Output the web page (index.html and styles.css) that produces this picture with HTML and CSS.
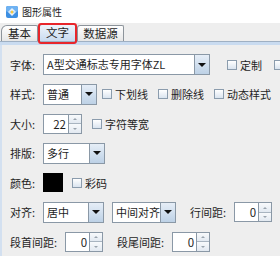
FILE: index.html
```html
<!DOCTYPE html>
<html lang="zh">
<head>
    <meta charset="UTF-8">
    <title>图形属性</title>
    <link rel="stylesheet" href="styles.css">
</head>
<body>
    <div class="titlebar">
        <svg class="app-icon" width="12" height="12" viewBox="0 0 12 12">
            <rect x="0" y="0" width="12" height="12" rx="2" fill="#3d8fe2"/>
            <rect x="0" y="0" width="12" height="6" rx="2" fill="#6fb2f2"/>
            <path d="M6 2 L10 6 L6 10 L2 6 Z" fill="#e8f2fc"/>
            <circle cx="6" cy="6" r="1.6" fill="#f5c842"/>
            <circle cx="4.2" cy="6" r="0.8" fill="#9cc8f0"/>
            <circle cx="7.8" cy="6" r="0.8" fill="#9cc8f0"/>
        </svg>
        <span>图形属性</span>
    </div>

    <div class="tabstrip">
        <div class="tab tab-first">基本</div>
        <div class="tab tab-active">文字</div>
        <div class="tab tab-wide">数据源</div>
        <div class="tab-mark"></div>
    </div>
    <div class="tabline"></div>

    <div class="panel">
        <div class="row">
            <span class="label">字体:</span>
            <div class="combo w-font">
                <span class="combo-text">A型交通标志专用字体ZL</span>
                <span class="combo-btn"><i class="arrow"></i></span>
            </div>
            <span class="check gap-17"><i class="cb"></i>定制</span>
            <span class="check gap-12"><i class="cb"></i></span>
        </div>
        <div class="row">
            <span class="label">样式:</span>
            <div class="combo w-style">
                <span class="combo-text">普通</span>
                <span class="combo-btn"><i class="arrow"></i></span>
            </div>
            <span class="check gap-5"><i class="cb"></i>下划线</span>
            <span class="check gap-10"><i class="cb"></i>删除线</span>
            <span class="check gap-10"><i class="cb"></i>动态样式</span>
        </div>
        <div class="row">
            <span class="label">大小:</span>
            <div class="spin w-size">
                <span class="spin-text">22</span>
                <span class="spin-btns"><i class="up"></i><i class="down"></i></span>
            </div>
            <span class="check gap-10"><i class="cb"></i>字符等宽</span>
        </div>
        <div class="row">
            <span class="label">排版:</span>
            <div class="combo w-layout">
                <span class="combo-text">多行</span>
                <span class="combo-btn"><i class="arrow"></i></span>
            </div>
        </div>
        <div class="row">
            <span class="label">颜色:</span>
            <span class="swatch"></span>
            <span class="check gap-9"><i class="cb"></i>彩码</span>
        </div>
        <div class="row">
            <span class="label">对齐:</span>
            <div class="combo w-align">
                <span class="combo-text">居中</span>
                <span class="combo-btn"><i class="arrow"></i></span>
            </div>
            <div class="combo w-valign gap-8">
                <span class="combo-text">中间对齐</span>
                <span class="combo-btn"><i class="arrow"></i></span>
            </div>
            <span class="label-inline gap-14">行间距:</span>
            <div class="spin w-num gap-8">
                <span class="spin-text">0</span>
                <span class="spin-btns"><i class="up"></i><i class="down"></i></span>
            </div>
        </div>
        <div class="row">
            <span class="label-inline">段首间距:</span>
            <div class="spin w-num gap-8">
                <span class="spin-text">0</span>
                <span class="spin-btns"><i class="up"></i><i class="down"></i></span>
            </div>
            <span class="label-inline gap-14">段尾间距:</span>
            <div class="spin w-num gap-8">
                <span class="spin-text">0</span>
                <span class="spin-btns"><i class="up"></i><i class="down"></i></span>
            </div>
        </div>
    </div>
</body>
</html>
```

FILE: styles.css
```css
body {
    margin: 0;
    width: 280px;
    height: 256px;
    overflow: hidden;
    background-color: #eeeeee;
    font-family: "Noto Sans CJK SC", "Liberation Sans", sans-serif;
    font-size: 11px;
    color: #1e1e1e;
}
.titlebar {
    height: 23px;
    background-color: #fff;
    display: flex;
    align-items: center;
    padding-left: 6px;
    gap: 4px;
    font-size: 10px;
}
.app-icon {
    flex: none;
}
.tabstrip {
    position: relative;
    height: 18px;
    display: flex;
    align-items: flex-end;
    padding-left: 1px;
}
.tab {
    box-sizing: border-box;
    height: 16px;
    border: 1px solid #8d949b;
    border-bottom: none;
    border-radius: 3px 2px 0 0;
    background: linear-gradient(#ffffff, #e6e6e6);
    font-size: 11.5px;
    line-height: 15px;
    text-align: center;
}
.tab-first {
    width: 37px;
    border-top-left-radius: 6px;
}
.tab-active {
    width: 37px;
    margin-left: 1px;
    height: 17px;
    border-color: #9aaabb;
    background: linear-gradient(#eef4fb, #c9dbf0);
}
.tab-wide {
    width: 47px;
    margin-left: 1px;
}
.tab-mark {
    position: absolute;
    left: 38px;
    top: 0;
    width: 39px;
    height: 21px;
    box-sizing: border-box;
    border: 2px solid #e8262b;
    border-radius: 3px;
}
.tabline {
    height: 3px;
    border-top: 1px solid #9fb0c3;
    background-color: #c9dbf0;
}
.panel {
    height: 214px;
    border-left: 2px solid #d3e0f0;
    padding: 5px 0 0 8px;
}
.row {
    height: 29.5px;
    display: flex;
    align-items: center;
}
.label {
    width: 33px;
    flex: none;
}
.label-inline {
    flex: none;
}
.combo, .spin {
    box-sizing: border-box;
    display: flex;
    flex: none;
    height: 21px;
    border: 1px solid #8a98a6;
    background-color: #fff;
}
.combo-text {
    flex: 1;
    padding-left: 3px;
    line-height: 19px;
    white-space: nowrap;
    overflow: hidden;
}
.combo-btn {
    width: 14px;
    border-left: 1px solid #8a98a6;
    background: linear-gradient(#e6eef7, #bdd1e6);
    display: flex;
    align-items: center;
    justify-content: center;
}
.arrow {
    width: 0;
    height: 0;
    border-left: 4px solid transparent;
    border-right: 4px solid transparent;
    border-top: 4px solid #111;
}
.w-font { width: 167px; }
.w-style { width: 54px; }
.w-layout { width: 62px; }
.w-align { width: 61px; }
.w-valign { width: 64px; }
.spin {
    height: 20px;
}
.w-size { width: 39px; }
.w-num { width: 38px; }
.spin-text {
    flex: 1;
    text-align: right;
    padding-right: 2px;
    line-height: 18px;
    font-size: 11.5px;
}
.spin-btns {
    width: 12px;
    border-left: 1px solid #8a98a6;
    display: flex;
    flex-direction: column;
}
.spin-btns i {
    flex: 1;
    display: flex;
    align-items: center;
    justify-content: center;
    background: linear-gradient(#f8fafc, #e2e9f1);
}
.spin-btns .up {
    border-bottom: 1px solid #a8b4c0;
}
.spin-btns .up::after, .spin-btns .down::after {
    content: "";
    width: 0;
    height: 0;
    border-left: 2px solid transparent;
    border-right: 2px solid transparent;
}
.spin-btns .up::after {
    border-bottom: 2px solid #9aa4ae;
}
.spin-btns .down::after {
    border-top: 2px solid #9aa4ae;
}
.check {
    display: flex;
    align-items: center;
    gap: 3px;
    flex: none;
    white-space: nowrap;
}
.cb {
    box-sizing: border-box;
    width: 10px;
    height: 10px;
    border: 1px solid #8b9cad;
    background: linear-gradient(#ffffff, #dae4ef);
}
.swatch {
    width: 20px;
    height: 19px;
    background-color: #000;
    flex: none;
}
.gap-5 { margin-left: 5px; }
.gap-8 { margin-left: 8px; }
.gap-9 { margin-left: 9px; }
.gap-10 { margin-left: 10px; }
.gap-12 { margin-left: 12px; }
.gap-14 { margin-left: 14px; }
.gap-17 { margin-left: 17px; }
```
